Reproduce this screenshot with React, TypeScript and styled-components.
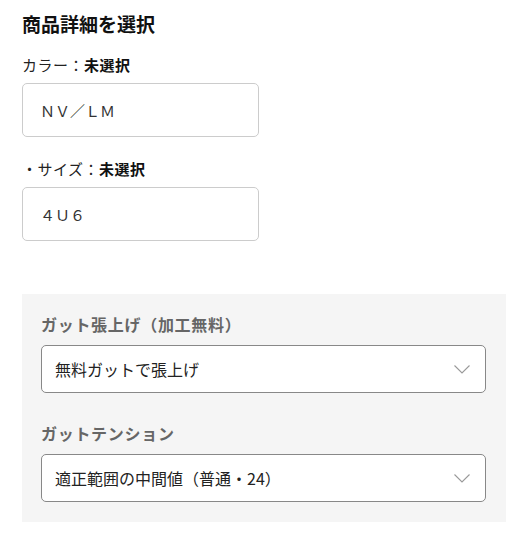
import React from "react";
import styled, { createGlobalStyle } from "styled-components";

const GlobalStyle = createGlobalStyle`
  html, body {
    margin: 0;
    padding: 0;
    background: #fff;
  }
  body {
    font-family: "Noto Sans CJK JP", "Noto Sans", sans-serif;
    color: #222;
  }
`;

const Page = styled.div`
  padding: 11px 22px 22px;
  width: 484px;
`;

const Title = styled.h2`
  margin: 0;
  font-size: 19px;
  line-height: 26px;
  font-weight: 700;
  color: #111;
`;

const OptionLabel = styled.div<{ $first?: boolean }>`
  margin-top: ${(p) => (p.$first ? "17px" : "21px")};
  font-size: 15px;
  line-height: 22px;
  letter-spacing: 0.5px;
  color: #222;

  b {
    font-weight: 700;
    color: #111;
  }
`;

const ValueBox = styled.div`
  box-sizing: border-box;
  margin-top: 7px;
  width: 237px;
  height: 54px;
  border: 1px solid #ccc;
  border-radius: 5px;
  padding: 0 17px;
  display: flex;
  align-items: center;
  font-size: 15px;
  color: #333;
`;

const Panel = styled.div`
  margin-top: 53px;
  background: #f5f5f5;
  padding: 18px 20px 20px 19px;
  display: flex;
  flex-direction: column;
  gap: 28px;
`;

const Field = styled.div`
  display: flex;
  flex-direction: column;
  gap: 9px;
`;

const FieldLabel = styled.div`
  font-size: 16px;
  line-height: 24px;
  letter-spacing: 0.7px;
  font-weight: 700;
  color: #666;
`;

const SelectBox = styled.div`
  box-sizing: border-box;
  height: 48px;
  background: #fff;
  border: 1px solid #888;
  border-radius: 5px;
  padding: 0 15px 0 13px;
  display: flex;
  align-items: center;
  justify-content: space-between;
  font-size: 16px;
  color: #222;
`;

const Chevron = () => (
  <svg width="16" height="9" viewBox="0 0 16 9" fill="none">
    <path d="M0.5 0.5 L8 8 L15.5 0.5" stroke="#999" strokeWidth="1.1" />
  </svg>
);

const options = [
  { label: "カラー", value: "ＮＶ／ＬＭ", prefix: "" },
  { label: "サイズ", value: "４Ｕ６", prefix: "・" },
];

const selects = [
  { label: "ガット張上げ（加工無料）", value: "無料ガットで張上げ" },
  { label: "ガットテンション", value: "適正範囲の中間値（普通・24）" },
];

export default function App() {
  return (
    <>
      <GlobalStyle />
      <Page>
        <Title>商品詳細を選択</Title>
        {options.map((o, i) => (
          <React.Fragment key={o.label}>
            <OptionLabel $first={i === 0}>
              {o.prefix}
              {o.label}：<b>未選択</b>
            </OptionLabel>
            <ValueBox>{o.value}</ValueBox>
          </React.Fragment>
        ))}
        <Panel>
          {selects.map((s) => (
            <Field key={s.label}>
              <FieldLabel>{s.label}</FieldLabel>
              <SelectBox>
                <span>{s.value}</span>
                <Chevron />
              </SelectBox>
            </Field>
          ))}
        </Panel>
      </Page>
    </>
  );
}
